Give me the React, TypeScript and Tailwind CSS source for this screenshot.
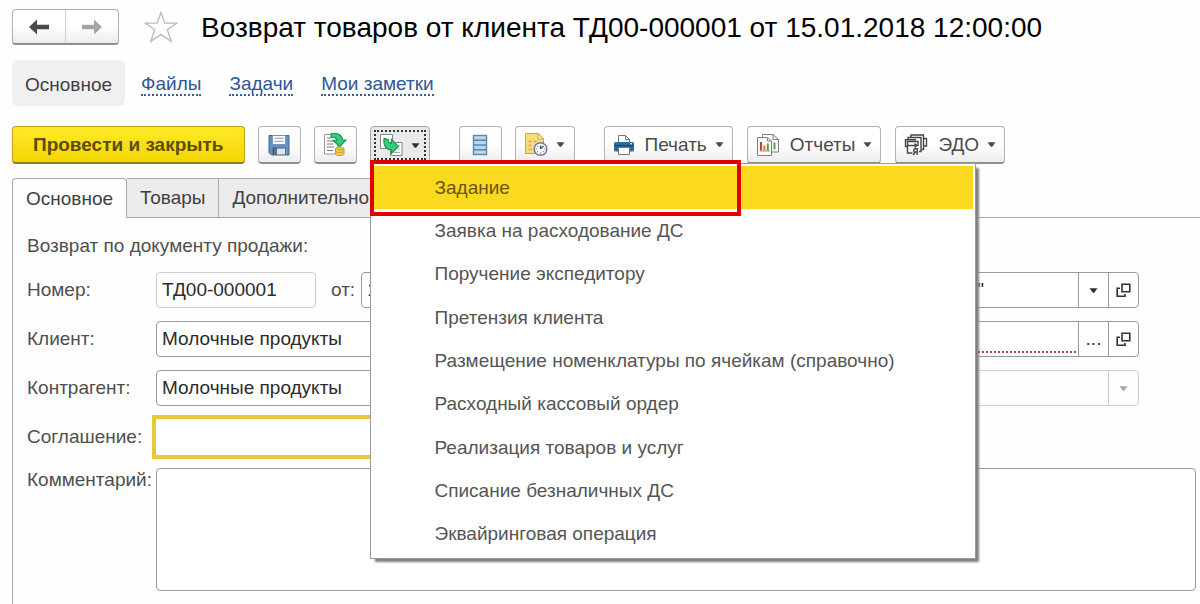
import type { ReactNode } from "react";

const menuItems = [
  "Задание",
  "Заявка на расходование ДС",
  "Поручение экспедитору",
  "Претензия клиента",
  "Размещение номенклатуры по ячейкам (справочно)",
  "Расходный кассовый ордер",
  "Реализация товаров и услуг",
  "Списание безналичных ДС",
  "Эквайринговая операция",
];

const toolButton =
  "flex h-[38px] items-center justify-center rounded-[4px] border border-b-2 border-[#b4b4b4] border-b-[#8f8f8f] bg-linear-to-b from-white from-50% to-[#ececec] text-[#4a4a4a]";
const fieldBox =
  "flex h-9 min-w-0 items-stretch overflow-hidden rounded-[4px] border border-[#9a9a9a] bg-white";
const fieldInput = "w-full min-w-0 bg-transparent px-[5px] text-[#2b2b2b] outline-none";
const fieldButton =
  "flex w-[30px] shrink-0 items-center justify-center border-l border-[#9a9a9a] text-[#333]";
const labelText = "w-[129px] shrink-0 text-[#4f4f4f]";
const navLink = "mt-1 border-b-2 border-dotted border-[#3c5f96] leading-5 text-[#2f5796]";

function Caret() {
  return (
    <svg width="9" height="5" viewBox="0 0 9 5" aria-hidden="true">
      <path d="M0.5 0.2h8L5.2 4.8H3.8z" fill="currentColor" />
    </svg>
  );
}

function ArrowIcon({ flip = false }: { flip?: boolean }) {
  return (
    <svg width="22" height="16" viewBox="0 0 22 16" className={flip ? "-scale-x-100" : ""} aria-hidden="true">
      <path d="M1 8L9 0.5V5.8H21V10.2H9V15.5z" fill="currentColor" />
    </svg>
  );
}

function StarIcon() {
  return (
    <svg width="34" height="32" viewBox="0 0 34 32" aria-hidden="true">
      <path
        d="M17 1.5L20.8 12.2H32.6L23.3 18.8L27.2 30.4L17 23.4L6.8 30.4L10.7 18.8L1.4 12.2H13.2z"
        fill="white"
        stroke="#b9b9b9"
        strokeWidth="1.3"
      />
    </svg>
  );
}

function SaveIcon() {
  return (
    <svg width="22" height="22" viewBox="0 0 22 22" aria-hidden="true">
      <path d="M1 1.5H21V21H3.5L1 18.5z" fill="#5f93c4" stroke="#44668c" />
      <rect x="4.5" y="1.5" width="13" height="9" fill="#f5f9fc" stroke="#6c8cad" strokeWidth="0.8" />
      <path d="M6.5 4.3h9M6.5 7.3h9" stroke="#8ba0b4" />
      <rect x="4.5" y="13.5" width="13" height="7.5" fill="#4b5e73" />
      <rect x="9" y="14.5" width="8" height="6" fill="#dce4eb" />
      <rect x="6" y="14.5" width="3" height="6" fill="#5f6f80" />
    </svg>
  );
}

function PostIcon() {
  return (
    <svg width="24" height="25" viewBox="0 0 24 25" aria-hidden="true">
      <path d="M1.5 2.5H15V22H1.5z" fill="white" stroke="#9a9a9a" />
      <path d="M4 6h4M4 9h6M4 12h6M4 15h7M4 18.5h6" stroke="#777" strokeWidth="1.2" />
      <path
        d="M8 1.8C14 .2 19.3 3 19.6 8H23L16.6 14.6L10 8.2H13.8C13.4 5.8 11.6 4.8 8 5.4z"
        fill="#3acb7e"
        stroke="#168d50"
        strokeWidth="1.1"
      />
      <path d="M12.5 16.5C12.5 14.8 21 14.8 21 16.5V22C21 24 12.5 24 12.5 22z" fill="#f3cf4f" stroke="#c89b2b" />
      <path d="M12.7 19.6C14.5 20.8 19 20.8 20.8 19.6M12.7 16.8C14.5 18 19 18 20.8 16.8" fill="none" stroke="#c89b2b" />
    </svg>
  );
}

function CreateFromIcon() {
  return (
    <svg width="24" height="24" viewBox="0 0 24 24" aria-hidden="true">
      <path d="M1.5 1.5H13.5V15.5H1.5z" fill="white" stroke="#7d8a85" />
      <path d="M11.5 9.5H23V22.5H11.5z" fill="white" stroke="#7d8a85" />
      <path d="M18.5 13h2.5M18.5 16h2.5M15 19.5h6" stroke="#a5a5a5" />
      <path
        d="M5 5.4L9.4 6.6C9.2 9 10 10.2 12.4 10.3V6.4L19.2 13.4L12.4 20.6V16.8C6.6 16.6 4 11.8 5 5.4z"
        fill="#3acb7e"
        stroke="#168d50"
        strokeWidth="1.1"
      />
    </svg>
  );
}

function ListIcon() {
  return (
    <svg width="16" height="22" viewBox="0 0 16 22" aria-hidden="true">
      <rect x="1.5" y="1.5" width="13" height="19" fill="#b8d8ee" stroke="#5d86a8" strokeWidth="1.4" />
      <path d="M1.5 6.2h13M1.5 11h13M1.5 15.8h13" stroke="#5d86a8" strokeWidth="1.4" />
    </svg>
  );
}

function ScheduleIcon() {
  return (
    <svg width="24" height="25" viewBox="0 0 24 25" aria-hidden="true">
      <path d="M1.5 1.5H14L19.5 7V21.5H1.5z" fill="#f8dc79" stroke="#c9a548" />
      <path d="M14 1.5V7H19.5z" fill="#fff2bd" stroke="#c9a548" />
      <path d="M4.5 9.5h3M9.5 9.5h3M4.5 13.5h3M4.5 17.5h3" stroke="#d0aa45" strokeWidth="1.6" />
      <circle cx="16.5" cy="17" r="6.3" fill="white" stroke="#5e7fa3" strokeWidth="1.5" />
      <path d="M16.5 17L19.5 13.8M16.5 17V13.5" stroke="#3c5a80" strokeWidth="1.3" />
      <path d="M16.5 20.4v1.4M20.2 17h1.4M11.6 17h1.4M13.2 20.2l.9-.9M19.8 20.2l-.9-.9M13.2 13.8l.9.9" stroke="#d04f45" strokeWidth="1.2" />
    </svg>
  );
}

function PrintIcon() {
  return (
    <svg width="22" height="22" viewBox="0 0 22 22" aria-hidden="true">
      <path d="M5.5 10V1.5H12.5L16.5 5.5V10" fill="white" stroke="#777" />
      <path d="M12.5 1.5V5.5H16.5" fill="none" stroke="#777" />
      <rect x="1" y="8" width="20" height="9.5" rx="1.5" fill="#2e6c99" />
      <path d="M1.5 11.6h19" stroke="#174b70" strokeWidth="1.4" />
      <path d="M17 9.8h2" stroke="white" />
      <path d="M5.5 13.5H16.5V20.5H5.5z" fill="white" stroke="#777" />
    </svg>
  );
}

function ReportIcon() {
  return (
    <svg width="24" height="24" viewBox="0 0 24 24" aria-hidden="true">
      <path d="M6.5 1.5H17L22.5 6.5V19H6.5z" fill="#fafafa" stroke="#7f7f7f" />
      <path d="M17 1.5V6.5H22.5" fill="none" stroke="#7f7f7f" />
      <path d="M18.5 9.5v7" stroke="#6aa04f" strokeWidth="2" />
      <path d="M1.5 4.5H11.5L15.5 8V22.5H1.5z" fill="white" stroke="#7f7f7f" />
      <path d="M11.5 4.5V8H15.5" fill="none" stroke="#7f7f7f" />
      <path d="M5 9v8.5" stroke="#c83f34" strokeWidth="2.2" />
      <path d="M8.4 12.5v5" stroke="#d87936" strokeWidth="2" />
      <path d="M11.8 10.5v7" stroke="#579b48" strokeWidth="2" />
      <path d="M3.5 18h10.5" stroke="#777" strokeWidth="0.8" />
    </svg>
  );
}

function ExchangeIcon() {
  return (
    <svg width="24" height="24" viewBox="0 0 24 24" aria-hidden="true">
      <g fill="none" stroke="#454545" strokeWidth="1.4">
        <path d="M7 4.5V2H19.5V16.5H17.5" />
        <path d="M4 7V4.5H17V18.5H15" />
        <path d="M19.5 5.5H22.5V13H19.5" />
        <path d="M8.5 20H3.5V8.5H14V13" />
        <path d="M3.5 13.5H1.5V6.8H12" />
        <path d="M3.5 12.5H13M10.5 10.5L13 12.5L10.5 14.5" />
        <path d="M13.2 22V15.8H11.4C9.2 15.8 9.2 19 11.4 19H13.2M11.3 19L9.2 22" />
      </g>
    </svg>
  );
}

function OpenIcon() {
  return (
    <svg width="15" height="15" viewBox="0 0 15 15" aria-hidden="true">
      <path d="M6 1.2H13.8V8.8H6z" fill="none" stroke="currentColor" strokeWidth="1.6" />
      <path d="M4 5.2H1.2V13.2H9V11" fill="none" stroke="currentColor" strokeWidth="1.6" />
    </svg>
  );
}

function IconButton({ label, children }: { label: string; children: ReactNode }) {
  return (
    <button type="button" aria-label={label} className={`${toolButton} w-[43px]`}>
      {children}
    </button>
  );
}

function MenuButton({ icon, text }: { icon: ReactNode; text: string }) {
  return (
    <button type="button" aria-haspopup="menu" className={`${toolButton} px-2`}>
      {icon}
      <span className="mr-2 ml-[10px]">{text}</span>
      <Caret />
    </button>
  );
}

function CreateMenu() {
  return (
    <div className="relative">
      <button
        type="button"
        aria-label="Создать на основании"
        aria-haspopup="menu"
        aria-expanded="true"
        className="flex h-[38px] w-[60px] items-center justify-center rounded-[4px] border border-[#a8a8a8] bg-[#e9e9e9] p-[3px] text-[#333]"
      >
        <span className="flex h-full w-full items-center justify-center gap-2 border-2 border-dotted border-[#333]">
          <CreateFromIcon />
          <Caret />
        </span>
      </button>
      <div
        role="menu"
        className="absolute top-[37px] left-0 z-10 grid h-[396px] w-[606px] grid-rows-9 border border-[#9b9b9b] bg-white p-[2px] shadow-[4px_4px_2px_-1px_#808080]"
      >
        {menuItems.map((item, index) => (
          <button
            key={item}
            type="button"
            role="menuitem"
            className={`flex items-center pl-[62px] text-left ${
              index === 0 ? "bg-[#fbd91f] text-[#6b5614]" : "text-[#555]"
            }`}
          >
            {item}
          </button>
        ))}
      </div>
      <div className="pointer-events-none absolute top-[34px] left-0 z-20 h-14 w-[371px] border-4 border-[#e10000]" />
    </div>
  );
}

export default function App() {
  return (
    <div className="flex min-h-screen flex-col overflow-hidden bg-[#fefefe] pl-3 font-['Liberation_Sans',Arial,sans-serif] text-[19px] leading-6">
      <header className="flex items-center pt-[9px]">
        <div className="flex h-9 w-[107px] shrink-0 rounded-[4px] border border-b-2 border-[#b0b0b0] border-b-[#8c8c8c] bg-linear-to-b from-white from-50% to-[#ececec]">
          <button type="button" aria-label="Назад" className="flex flex-1 items-center justify-center border-r border-[#cfcfcf] text-[#4a4a4a]">
            <ArrowIcon />
          </button>
          <button type="button" aria-label="Вперед" className="flex flex-1 items-center justify-center text-[#a6a6a6]">
            <ArrowIcon flip />
          </button>
        </div>
        <button type="button" aria-label="В избранное" className="ml-[25px] shrink-0">
          <StarIcon />
        </button>
        <h1 className="ml-[23px] pt-[2px] text-[28px] leading-8 whitespace-nowrap text-black">
          Возврат товаров от клиента ТД00-000001 от 15.01.2018 12:00:00
        </h1>
      </header>

      <nav className="mt-[15px] flex items-center gap-7">
        <a href="#main" className="-mr-3 flex h-[46px] items-center rounded-md bg-[#f0f0f0] px-[13px] pt-1 text-[#404040]">
          Основное
        </a>
        <a href="#files" className={navLink}>Файлы</a>
        <a href="#tasks" className={navLink}>Задачи</a>
        <a href="#notes" className={navLink}>Мои заметки</a>
      </nav>

      <div role="toolbar" className="mt-5 flex items-center gap-[29px]">
        <div className="flex gap-[13px]">
          <button
            type="button"
            className="h-[38px] rounded-[4px] border border-b-2 border-[#bfa21a] border-b-[#8f7a1d] bg-linear-to-b from-[#ffe925] to-[#f2d600] px-5 font-bold whitespace-nowrap text-[#5c4d0c]"
          >
            Провести и закрыть
          </button>
          <IconButton label="Записать"><SaveIcon /></IconButton>
          <IconButton label="Провести"><PostIcon /></IconButton>
          <CreateMenu />
        </div>
        <div className="flex gap-[13px]">
          <IconButton label="Список"><ListIcon /></IconButton>
          <button type="button" aria-label="Напоминания" aria-haspopup="menu" className={`${toolButton} w-[60px] gap-2`}>
            <ScheduleIcon />
            <Caret />
          </button>
        </div>
        <div className="flex gap-[14px]">
          <MenuButton icon={<PrintIcon />} text="Печать" />
          <MenuButton icon={<ReportIcon />} text="Отчеты" />
          <MenuButton icon={<ExchangeIcon />} text="ЭДО" />
        </div>
      </div>

      <div role="tablist" className="relative mt-[14px] -mb-px flex h-10 items-stretch text-[#404040]">
        <button type="button" role="tab" aria-selected="true" className="rounded-t-[4px] border border-b-0 border-[#a9a9a9] bg-[#fefefe] px-[13px]">
          Основное
        </button>
        <button type="button" role="tab" aria-selected="false" className="border border-l-0 border-[#a9a9a9] bg-[#ececec] px-[13px]">
          Товары
        </button>
        <button type="button" role="tab" aria-selected="false" className="rounded-tr-[4px] border border-l-0 border-[#a9a9a9] bg-[#ececec] px-[13px]">
          Дополнительно
        </button>
      </div>

      <form className="flex flex-1 flex-col gap-[13px] border-t border-l border-[#a9a9a9] pt-4 pr-1 pb-3 pl-[14px]">
        <p className="text-[#4f4f4f]">Возврат по документу продажи:</p>

        <div className="mt-[1px] flex gap-8 pr-[57px]">
          <div className="flex flex-1 items-center">
            <label htmlFor="number" className={labelText}>Номер:</label>
            <div className="flex h-9 w-40 shrink-0 rounded-[4px] border border-[#cfcfcf]">
              <input id="number" readOnly defaultValue="ТД00-000001" className={fieldInput} />
            </div>
            <label htmlFor="date" className="mr-[6px] ml-[15px] text-[#4f4f4f]">от:</label>
            <div className={`${fieldBox} flex-1`}>
              <input id="date" defaultValue="15.01.2018 12:00:00" className={fieldInput} />
            </div>
          </div>
          <div className={`${fieldBox} flex-1`}>
            <input aria-label="Организация" defaultValue={'"'} className={`${fieldInput} pr-[94px] text-right`} />
            <button type="button" aria-label="Выбрать организацию" className={fieldButton}><Caret /></button>
            <button type="button" aria-label="Открыть организацию" className={fieldButton}><OpenIcon /></button>
          </div>
        </div>

        <div className="flex gap-8 pr-[57px]">
          <div className="flex flex-1 items-center">
            <label htmlFor="client" className={labelText}>Клиент:</label>
            <div className={`${fieldBox} flex-1`}>
              <input id="client" defaultValue="Молочные продукты" className={fieldInput} />
            </div>
          </div>
          <div className={`${fieldBox} flex-1`}>
            <div className="flex flex-1 px-[2px] pb-[3px]">
              <input aria-label="Документ" className="w-full min-w-0 border-b-2 border-dotted border-[#b5484c] outline-none" />
            </div>
            <button type="button" aria-label="Выбрать документ" className={fieldButton}>...</button>
            <button type="button" aria-label="Открыть документ" className={fieldButton}><OpenIcon /></button>
          </div>
        </div>

        <div className="flex gap-8 pr-[57px]">
          <div className="flex flex-1 items-center">
            <label htmlFor="partner" className={labelText}>Контрагент:</label>
            <div className={`${fieldBox} flex-1`}>
              <input id="partner" defaultValue="Молочные продукты" className={fieldInput} />
            </div>
          </div>
          <div className="flex h-9 flex-1 rounded-[4px] border border-[#cfcfcf]">
            <input aria-label="Договор" disabled className={fieldInput} />
            <button type="button" disabled aria-label="Выбрать договор" className="flex w-[30px] shrink-0 items-center justify-center border-l border-[#cfcfcf] text-[#a8a8a8]">
              <Caret />
            </button>
          </div>
        </div>

        <div className="flex gap-8 pr-[57px]">
          <div className="flex flex-1 items-center">
            <label htmlFor="agreement" className={labelText}>Соглашение:</label>
            <div className="flex h-9 flex-1 bg-white ring-4 ring-[#e6c936]">
              <input id="agreement" className={fieldInput} />
            </div>
          </div>
          <div className="flex-1" />
        </div>

        <div className="flex items-start">
          <label htmlFor="comment" className={labelText}>Комментарий:</label>
          <textarea id="comment" className="h-[123px] min-w-0 flex-1 resize-none rounded-[4px] border border-[#9a9a9a] bg-white p-[5px] outline-none" />
        </div>
      </form>
    </div>
  );
}
